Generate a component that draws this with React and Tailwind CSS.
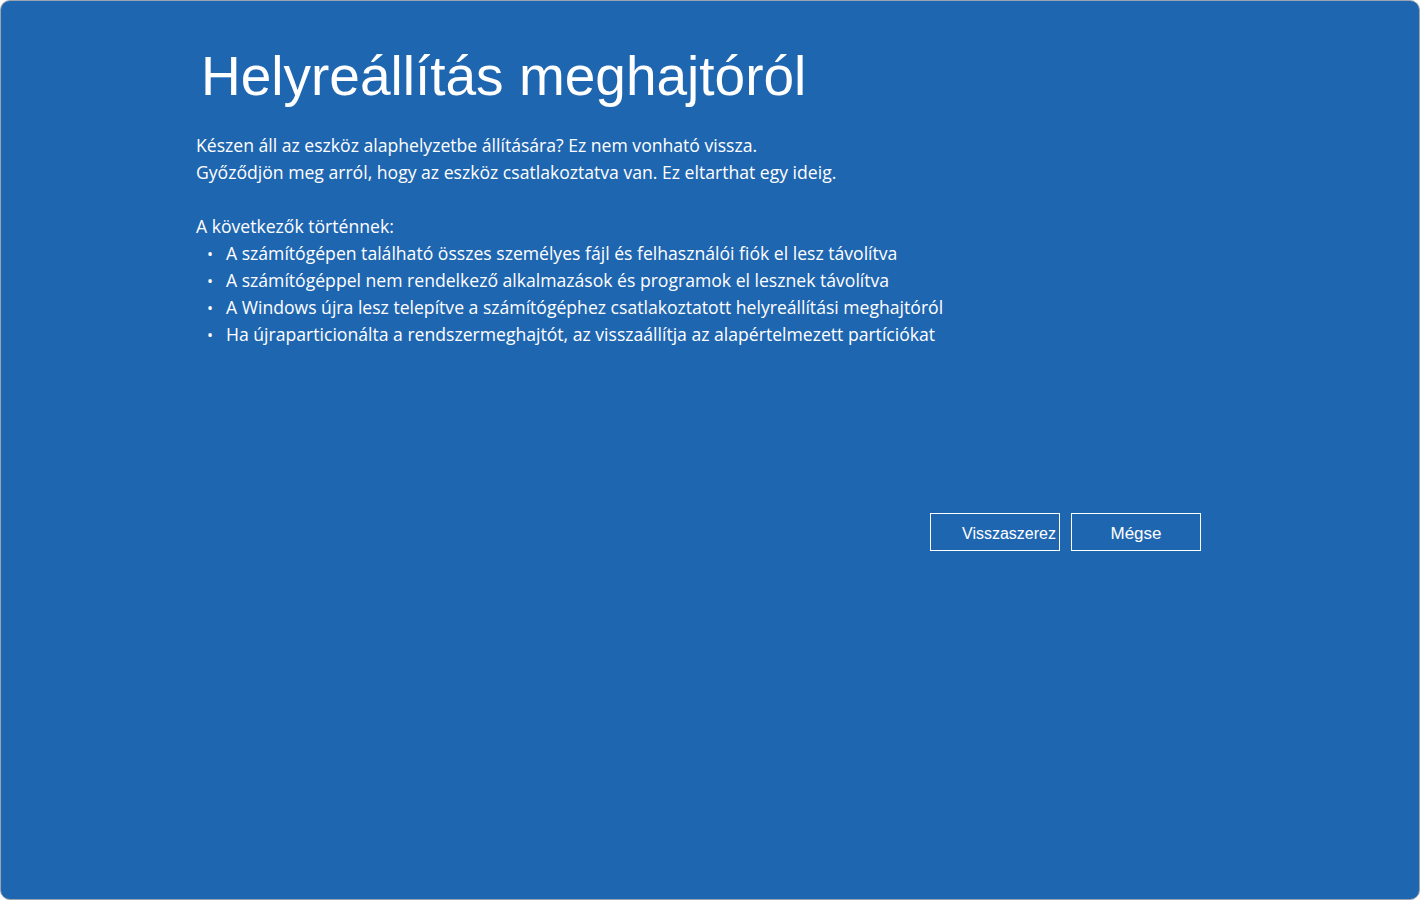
export default function App() {
  const f = { fontFamily: '"Segoe UI", "Open Sans", "Liberation Sans", sans-serif' };
  const items = [
    "A számítógépen található összes személyes fájl és felhasználói fiók el lesz távolítva",
    "A számítógéppel nem rendelkező alkalmazások és programok el lesznek távolítva",
    "A Windows újra lesz telepítve a számítógéphez csatlakoztatott helyreállítási meghajtóról",
    "Ha újraparticionálta a rendszermeghajtót, az visszaállítja az alapértelmezett partíciókat",
  ];
  return (
    <div className="w-[1420px] h-[900px] bg-white">
      <div className="w-[1420px] h-[900px] bg-[#1f66b1] rounded-[10px] border border-[#9aa5b1] text-white relative" style={f}>
        <div className="pl-[195px] pt-[42px]">
          <h1 className="text-[55px] leading-[66px] pl-[5px] font-normal" style={{fontFamily:'"Liberation Sans", sans-serif'}}>Helyreállítás meghajtóról</h1>
          <div className="mt-[23px] text-[17.6px] leading-[27px]">
            <p>Készen áll az eszköz alaphelyzetbe állítására? Ez nem vonható vissza.</p>
            <p>Győződjön meg arról, hogy az eszköz csatlakoztatva van. Ez eltarthat egy ideig.</p>
            <p className="mt-[27px]">A következők történnek:</p>
            <ul className="mt-0">
              {items.map((t) => (
                <li key={t} className="flex items-center h-[27px]">
                  <span className="w-[30px] pl-[11px] text-[16px] leading-none">•</span>
                  <span>{t}</span>
                </li>
              ))}
            </ul>
          </div>
        </div>
        <div className="absolute left-[929px] top-[512px] flex gap-[11px]">
          <button className="w-[130px] h-[38px] border border-white text-[16px] pl-[31px] pt-[4px] text-left overflow-hidden whitespace-nowrap" style={{fontFamily:'"Liberation Sans", sans-serif'}}>Visszaszerez</button>
          <button className="w-[130px] h-[38px] border border-white text-[17px] pt-[4px]" style={{fontFamily:'"Liberation Sans", sans-serif'}}>Mégse</button>
        </div>
      </div>
    </div>
  );
}
